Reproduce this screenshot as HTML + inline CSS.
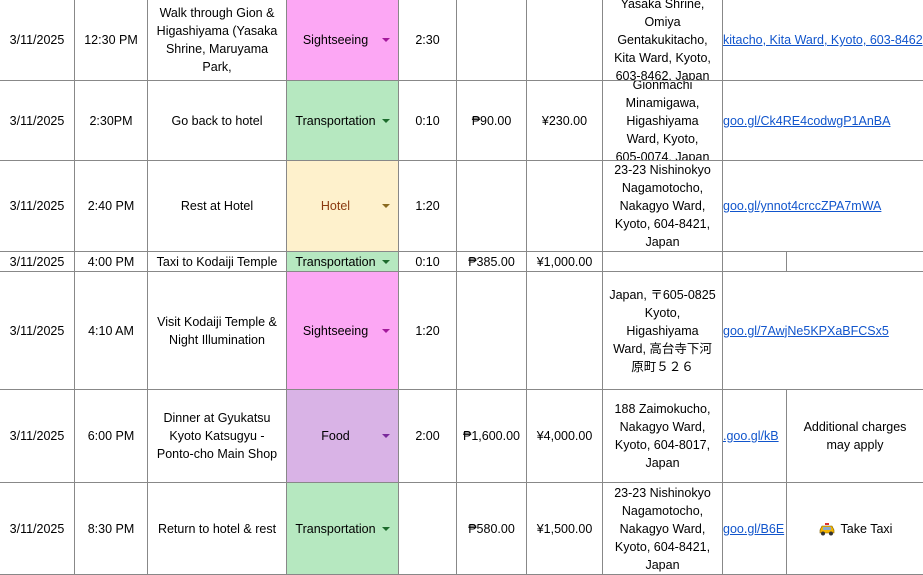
<!DOCTYPE html>
<html><head><meta charset="utf-8"><style>
body{margin:0;width:923px;height:575px;background:#fff;position:relative;overflow:hidden;font-family:"Liberation Sans","Noto Sans CJK JP",sans-serif;font-size:12.5px;color:#000}
.c{position:absolute;box-sizing:border-box;overflow:hidden;display:flex;align-items:center;justify-content:center;text-align:center;line-height:18px;border-right:1px solid #888;border-bottom:1px solid #888;padding:0 6px}
.l{justify-content:flex-start;text-align:left;white-space:nowrap;color:#1155cc;text-decoration:underline;overflow:visible;z-index:1;padding:0}
.arr{position:absolute;right:8px;top:50%;margin-top:-2px;width:0;height:0;border-left:4px solid transparent;border-right:4px solid transparent;border-top:4px solid}
.nb{border-right:none}
.d{padding:0 14px 0 0}
</style></head><body>
<!-- Row1 -->
<div class="c" style="left:0;top:0;width:75px;height:81px">3/11/2025</div>
<div class="c" style="left:75px;top:0;width:73px;height:81px">12:30 PM</div>
<div class="c" style="left:148px;top:0;width:139px;height:81px;padding:0 8px">Walk through Gion &amp; Higashiyama (Yasaka Shrine, Maruyama Park,</div>
<div class="c d" style="left:287px;top:0;width:112px;height:81px;background:#fca7f4">Sightseeing<span class="arr" style="color:#a3199b"></span></div>
<div class="c" style="left:399px;top:0;width:58px;height:81px">2:30</div>
<div class="c" style="left:457px;top:0;width:70px;height:81px"></div>
<div class="c" style="left:527px;top:0;width:76px;height:81px"></div>
<div class="c" style="left:603px;top:0;width:120px;height:81px;padding:0 8px">Yasaka Shrine, Omiya Gentakukitacho, Kita Ward, Kyoto, 603-8462, Japan</div>
<div class="c l nb" style="left:723px;top:0;width:200px;height:81px;overflow:hidden">kitacho, Kita Ward, Kyoto, 603-8462</div>
<!-- Row2 -->
<div class="c" style="left:0;top:81px;width:75px;height:80px">3/11/2025</div>
<div class="c" style="left:75px;top:81px;width:73px;height:80px">2:30PM</div>
<div class="c" style="left:148px;top:81px;width:139px;height:80px">Go back to hotel</div>
<div class="c d" style="left:287px;top:81px;width:112px;height:80px;background:#b6e8c0">Transportation<span class="arr" style="color:#1c6b2c"></span></div>
<div class="c" style="left:399px;top:81px;width:58px;height:80px">0:10</div>
<div class="c" style="left:457px;top:81px;width:70px;height:80px">₱90.00</div>
<div class="c" style="left:527px;top:81px;width:76px;height:80px">¥230.00</div>
<div class="c" style="left:603px;top:81px;width:120px;height:80px;padding:0 10px">Gionmachi Minamigawa, Higashiyama Ward, Kyoto, 605-0074, Japan</div>
<div class="c l nb" style="left:723px;top:81px;width:200px;height:80px;overflow:hidden">goo.gl/Ck4RE4codwgP1AnBA</div>
<!-- Row3 -->
<div class="c" style="left:0;top:161px;width:75px;height:91px">3/11/2025</div>
<div class="c" style="left:75px;top:161px;width:73px;height:91px">2:40 PM</div>
<div class="c" style="left:148px;top:161px;width:139px;height:91px">Rest at Hotel</div>
<div class="c d" style="left:287px;top:161px;width:112px;height:91px;background:#fef1cc;color:#8a3a0f">Hotel<span class="arr" style="color:#8a6a1f"></span></div>
<div class="c" style="left:399px;top:161px;width:58px;height:91px">1:20</div>
<div class="c" style="left:457px;top:161px;width:70px;height:91px"></div>
<div class="c" style="left:527px;top:161px;width:76px;height:91px"></div>
<div class="c" style="left:603px;top:161px;width:120px;height:91px">23-23 Nishinokyo Nagamotocho, Nakagyo Ward, Kyoto, 604-8421, Japan</div>
<div class="c l nb" style="left:723px;top:161px;width:200px;height:91px;overflow:hidden">goo.gl/ynnot4crccZPA7mWA</div>
<!-- Row4 -->
<div class="c" style="left:0;top:252px;width:75px;height:20px">3/11/2025</div>
<div class="c" style="left:75px;top:252px;width:73px;height:20px">4:00 PM</div>
<div class="c" style="left:148px;top:252px;width:139px;height:20px;white-space:nowrap;padding:0">Taxi to Kodaiji Temple</div>
<div class="c d" style="left:287px;top:252px;width:112px;height:20px;background:#b6e8c0">Transportation<span class="arr" style="color:#1c6b2c"></span></div>
<div class="c" style="left:399px;top:252px;width:58px;height:20px">0:10</div>
<div class="c" style="left:457px;top:252px;width:70px;height:20px">₱385.00</div>
<div class="c" style="left:527px;top:252px;width:76px;height:20px;padding:0">¥1,000.00</div>
<div class="c" style="left:603px;top:252px;width:120px;height:20px"></div>
<div class="c" style="left:723px;top:252px;width:64px;height:20px"></div>
<div class="c nb" style="left:787px;top:252px;width:136px;height:20px"></div>
<!-- Row5 -->
<div class="c" style="left:0;top:272px;width:75px;height:118px">3/11/2025</div>
<div class="c" style="left:75px;top:272px;width:73px;height:118px">4:10 AM</div>
<div class="c" style="left:148px;top:272px;width:139px;height:118px">Visit Kodaiji Temple &amp; Night Illumination</div>
<div class="c d" style="left:287px;top:272px;width:112px;height:118px;background:#fca7f4">Sightseeing<span class="arr" style="color:#a3199b"></span></div>
<div class="c" style="left:399px;top:272px;width:58px;height:118px">1:20</div>
<div class="c" style="left:457px;top:272px;width:70px;height:118px"></div>
<div class="c" style="left:527px;top:272px;width:76px;height:118px"></div>
<div class="c" style="left:603px;top:272px;width:120px;height:118px;padding:0 3px">Japan, 〒605-0825 Kyoto,<br>Higashiyama<br>Ward, 高台寺下河<br>原町５２６</div>
<div class="c l nb" style="left:723px;top:272px;width:200px;height:118px;overflow:hidden">goo.gl/7AwjNe5KPXaBFCSx5</div>
<!-- Row6 -->
<div class="c" style="left:0;top:390px;width:75px;height:93px">3/11/2025</div>
<div class="c" style="left:75px;top:390px;width:73px;height:93px">6:00 PM</div>
<div class="c" style="left:148px;top:390px;width:139px;height:93px;padding:0 4px">Dinner at Gyukatsu<br>Kyoto Katsugyu -<br>Ponto-cho Main Shop</div>
<div class="c d" style="left:287px;top:390px;width:112px;height:93px;background:#d9b3e6">Food<span class="arr" style="color:#7a2a9b"></span></div>
<div class="c" style="left:399px;top:390px;width:58px;height:93px">2:00</div>
<div class="c" style="left:457px;top:390px;width:70px;height:93px;padding:0">₱1,600.00</div>
<div class="c" style="left:527px;top:390px;width:76px;height:93px;padding:0">¥4,000.00</div>
<div class="c" style="left:603px;top:390px;width:120px;height:93px">188 Zaimokucho, Nakagyo Ward, Kyoto, 604-8017, Japan</div>
<div class="c l" style="left:723px;top:390px;width:64px;height:93px;overflow:hidden">.goo.gl/kB</div>
<div class="c nb" style="left:787px;top:390px;width:136px;height:93px">Additional charges<br>may apply</div>
<!-- Row7 -->
<div class="c" style="left:0;top:483px;width:75px;height:92px">3/11/2025</div>
<div class="c" style="left:75px;top:483px;width:73px;height:92px">8:30 PM</div>
<div class="c" style="left:148px;top:483px;width:139px;height:92px;white-space:nowrap;padding:0">Return to hotel &amp; rest</div>
<div class="c d" style="left:287px;top:483px;width:112px;height:92px;background:#b6e8c0">Transportation<span class="arr" style="color:#1c6b2c"></span></div>
<div class="c" style="left:399px;top:483px;width:58px;height:92px"></div>
<div class="c" style="left:457px;top:483px;width:70px;height:92px">₱580.00</div>
<div class="c" style="left:527px;top:483px;width:76px;height:92px;padding:0">¥1,500.00</div>
<div class="c" style="left:603px;top:483px;width:120px;height:92px">23-23 Nishinokyo Nagamotocho, Nakagyo Ward, Kyoto, 604-8421, Japan</div>
<div class="c l" style="left:723px;top:483px;width:64px;height:92px;overflow:hidden">goo.gl/B6E</div>
<div class="c nb" style="left:787px;top:483px;width:136px;height:92px"><svg width="18" height="14" viewBox="0 0 18 14" style="margin-right:5px"><rect x="7" y="1" width="4" height="2" fill="#d33"/><path d="M4 4h10l2 4v3H2V8z" fill="#f4b400" stroke="#7a5a00" stroke-width=".6"/><rect x="5" y="5" width="8" height="3" fill="#8ac"/><circle cx="5" cy="11.5" r="2" fill="#333"/><circle cx="13" cy="11.5" r="2" fill="#333"/></svg>Take Taxi</div>
</body></html>
